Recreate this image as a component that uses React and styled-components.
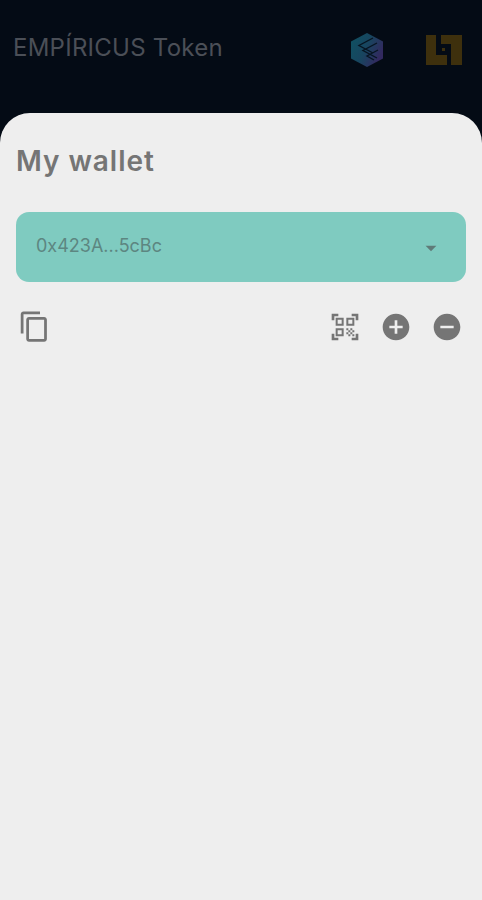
import { MdAddCircle, MdArrowDropDown, MdContentCopy, MdQrCodeScanner, MdRemoveCircle } from "react-icons/md";
import styled, { createGlobalStyle } from "styled-components";

const GlobalStyle = createGlobalStyle`
  html, body {
    margin: 0;
    padding: 0;
    height: 900px;
    overflow: hidden;
    background: #040b15;
    font-family: Inter, "Open Sans", "Liberation Sans", sans-serif;
  }
`;

const Page = styled.div`
  width: 482px;
  height: 900px;
  display: flex;
  flex-direction: column;
  background: #040b15;
`;

const Header = styled.header`
  height: 113px;
  flex: none;
  box-sizing: border-box;
  padding: 30px 20px 0 13px;
  display: flex;
  justify-content: space-between;
  align-items: flex-start;
`;

const AppTitle = styled.h1`
  margin: 0;
  font-size: 24px;
  line-height: 36px;
  font-weight: 400;
  letter-spacing: 0.25px;
  color: #4b4f57;
  white-space: nowrap;
`;

const Logos = styled.div`
  display: flex;
  align-items: center;
  gap: 42px;
  height: 40px;
`;

const Sheet = styled.main`
  flex: 1;
  box-sizing: border-box;
  padding: 26px 16px 0;
  background: #eeeeee;
  border-radius: 30px 30px 0 0;
`;

const SheetTitle = styled.h2`
  margin: 0 0 29px;
  font-size: 28px;
  line-height: 44px;
  font-weight: 600;
  letter-spacing: 0.95px;
  color: #757575;
`;

const WalletSelect = styled.div`
  height: 70px;
  box-sizing: border-box;
  padding: 0 24px 0 20px;
  display: flex;
  align-items: center;
  justify-content: space-between;
  background: #7fcbc0;
  border-radius: 13px;
  color: #5d8681;
  font-size: 18px;
  margin-bottom: 28px;

  svg {
    color: #5f7b78;
    margin-right: -2px;
    margin-top: 2px;
  }
`;

const Address = styled.span`
  position: relative;
  top: -2px;
`;

const Actions = styled.div`
  display: flex;
  align-items: center;
  justify-content: space-between;
  padding: 0 3px 0 2px;
  color: #757575;
`;

const ActionGroup = styled.div`
  display: flex;
  align-items: center;
  gap: ${(p) => p.$gap || 0}px;
`;

const IconSlot = styled.span`
  display: flex;
  width: ${(p) => p.$size}px;
  height: ${(p) => p.$size}px;
`;

const CubeLogo = () => (
  <svg width="34" height="36" viewBox="0 0 34 36">
    <defs>
      <linearGradient id="cube" x1="0" y1="0" x2="1" y2="0.5">
        <stop offset="0" stopColor="#0e5262" />
        <stop offset="0.55" stopColor="#18455f" />
        <stop offset="1" stopColor="#32295f" />
      </linearGradient>
    </defs>
    <path d="M17 1 33 9.5V26.5L17 35 1 26.5V9.5Z" fill="url(#cube)" />
    <path
      d="M23 6 9 13.5 23 21M27 11 13 18.5 27 26M28 18 17 24 24 28"
      fill="none"
      stroke="#071522"
      strokeWidth="1.4"
    />
  </svg>
);

const SquareLogo = () => (
  <svg width="36" height="30" viewBox="0 0 36 30">
    <path d="M0 0H10V20H21V30H0ZM15 0H36V30H25V9H15Z" fill="#3e300d" />
    <rect x="16" y="13" width="3" height="3" fill="#3e300d" />
  </svg>
);

export default function App() {
  return (
    <>
      <GlobalStyle />
      <Page>
        <Header>
          <AppTitle>EMPÍRICUS Token</AppTitle>
          <Logos>
            <CubeLogo />
            <SquareLogo />
          </Logos>
        </Header>
        <Sheet>
          <SheetTitle>My wallet</SheetTitle>
          <WalletSelect>
            <Address>0x423A...5cBc</Address>
            <MdArrowDropDown size={26} />
          </WalletSelect>
          <Actions>
            <IconSlot $size={33}>
              <MdContentCopy size={33} />
            </IconSlot>
            <ActionGroup $gap={19}>
              <IconSlot $size={32}>
                <MdQrCodeScanner size={32} />
              </IconSlot>
              <IconSlot $size={32}>
                <MdAddCircle size={32} />
              </IconSlot>
              <IconSlot $size={32}>
                <MdRemoveCircle size={32} />
              </IconSlot>
            </ActionGroup>
          </Actions>
        </Sheet>
      </Page>
    </>
  );
}
